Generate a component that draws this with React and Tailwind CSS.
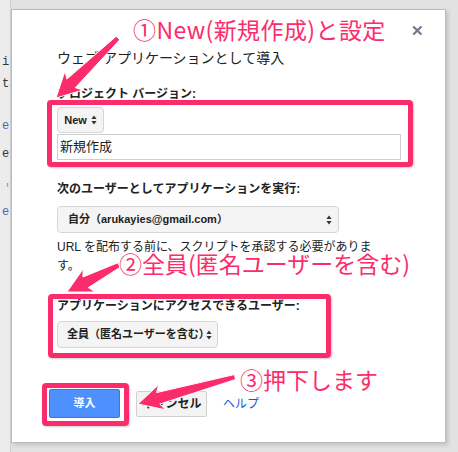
import React from 'react';

const PINK = '#fc2c6c';

// tapered annotation arrow, tail -> tip
function arrowPoints(x1, y1, x2, y2) {
  const dx = x2 - x1;
  const dy = y2 - y1;
  const len = Math.hypot(dx, dy);
  const ux = dx / len;
  const uy = dy / len;
  const nx = -uy;
  const ny = ux;
  const headLen = 25;
  const headHalf = 13;
  const t0 = 2.5;
  const t1 = 6;
  const bx = x2 - ux * headLen;
  const by = y2 - uy * headLen;
  const nb = 4; // small notch at the back of the head
  const pts = [
    [x1 + nx * t0, y1 + ny * t0],
    [bx + nx * t1 + ux * nb, by + ny * t1 + uy * nb],
    [bx + nx * headHalf, by + ny * headHalf],
    [x2, y2],
    [bx - nx * headHalf, by - ny * headHalf],
    [bx - nx * t1 + ux * nb, by - ny * t1 + uy * nb],
    [x1 - nx * t0, y1 - ny * t0],
  ];
  return pts.map((p) => p.map((v) => v.toFixed(1)).join(',')).join(' ');
}

const Updown = () => (
  <svg width="6" height="10" viewBox="0 0 6 10" className="shrink-0">
    <path d="M3 0.5 L5.6 4 L0.4 4 Z" fill="#333" />
    <path d="M3 9.5 L5.6 6 L0.4 6 Z" fill="#333" />
  </svg>
);

const App = () => {
  return (
    <div className="w-[458px] h-[452px] bg-[#e2e2e2] relative overflow-hidden flex font-['Liberation_Sans','Noto_Sans_CJK_JP',sans-serif]">
      {/* code editor behind the dialog */}
      <div className="w-[11px] shrink-0 h-full bg-[#ececec] border-r border-[#d0d0d0] overflow-hidden font-['Liberation_Mono',monospace] text-[12px] leading-[14px] text-[#333] whitespace-nowrap">
        <div className="mt-[55px] pl-[2px]">ip</div>
        <div className="mt-[8px] pl-[2px]">ta</div>
        <div className="mt-[28px] pl-[2px] text-[#3b6db5]">es</div>
        <div className="mt-[14px] pl-[2px]">ep</div>
        <div className="mt-[21px] pl-[4px] text-[#e06c8c]">'</div>
        <div className="mt-[9px] pl-[2px] text-[#3b6db5]">e.</div>
      </div>

      {/* dialog */}
      <div className="mt-[9px] w-[435px] h-[434px] bg-white border border-[#bdbdbd] shadow-[2px_2px_4px_rgba(0,0,0,0.15)] pl-[45px] pr-[19px] flex flex-col text-[#222]">
        <div className="flex justify-end pt-[15px] h-[38px]">
          <span className="text-[#777] text-[15px] font-bold leading-[12px] mr-[2px]">✕</span>
        </div>
        <div className="text-[14px] leading-[20px]">ウェブ アプリケーションとして導入</div>

        <div className="mt-[18px] text-[12px] leading-[16px] font-bold">プロジェクト バージョン:</div>
        <div className="mt-[5px] flex">
          <div className="h-[26px] w-[47px] rounded-[4px] border border-[#d6d6d6] bg-[#f4f4f4] flex items-center justify-center gap-[4px] text-[11px] font-bold">
            <span>New</span>
            <Updown />
          </div>
        </div>
        <div className="mt-[1px] h-[26px] w-[344px] border border-[#cfcfcf] flex items-center px-[2px] text-[13px]">新規作成</div>

        <div className="mt-[21px] text-[12px] leading-[16px] font-bold">次のユーザーとしてアプリケーションを実行:</div>
        <div className="mt-[9px] h-[27px] w-[282px] rounded-[4px] border border-[#d6d6d6] bg-[#f4f4f4] flex items-center justify-between pl-[10px] pr-[6px] text-[11px] font-bold">
          <span>自分（arukayies@gmail.com）</span>
          <Updown />
        </div>
        <div className="mt-[5px] text-[12px] leading-[19px]">
          URL を配布する前に、スクリプトを承認する必要がありま
          <br />
          す。
        </div>

        <div className="mt-[22px] text-[12px] leading-[16px] font-bold">アプリケーションにアクセスできるユーザー:</div>
        <div className="mt-[7px] h-[27px] w-[161px] rounded-[4px] border border-[#d6d6d6] bg-[#f4f4f4] flex items-center justify-between pl-[9px] pr-[5px] text-[11px] font-bold">
          <span>全員（匿名ユーザーを含む）</span>
          <Updown />
        </div>

        <div className="mt-[41px] flex items-center -ml-[8px]">
          <div className="h-[29px] w-[71px] rounded-[2px] border border-[#3079ed] bg-[#4d90fe] text-white text-[11px] font-bold flex items-center justify-center">導入</div>
          <div className="ml-[16px] h-[26px] w-[71px] rounded-[2px] border border-[#d0d0d0] bg-[#f3f3f3] text-[12px] font-bold flex items-center justify-center">キャンセル</div>
          <a className="ml-[16px] text-[12px] text-[#1a57c9]">ヘルプ</a>
        </div>
      </div>

      {/* annotation boxes */}
      <div className="absolute left-[47px] top-[100px] w-[366px] h-[67px] border-[5px] border-[#fc2c6c] rounded-[4px] shadow-[1px_1px_2px_rgba(0,0,0,0.2)]" />
      <div className="absolute left-[48px] top-[294px] w-[283px] h-[64px] border-[5px] border-[#fc2c6c] rounded-[4px] shadow-[1px_1px_2px_rgba(0,0,0,0.2)]" />
      <div className="absolute left-[42px] top-[383px] w-[87px] h-[43px] border-[5px] border-[#fc2c6c] rounded-[4px] shadow-[1px_1px_2px_rgba(0,0,0,0.2)]" />

      {/* annotation text */}
      <div className="absolute left-[133px] top-[14px] text-[23px] leading-[30px] tracking-[0.4px] text-[#fc2c6c] font-['Noto_Sans_CJK_JP',sans-serif] whitespace-nowrap">①New(新規作成)と設定</div>
      <div className="absolute left-[119px] top-[248px] text-[23px] leading-[30px] text-[#fc2c6c] font-['Noto_Sans_CJK_JP',sans-serif] whitespace-nowrap">②全員(匿名ユーザーを含む)</div>
      <div className="absolute left-[240px] top-[364px] text-[23px] leading-[30px] text-[#fc2c6c] font-['Noto_Sans_CJK_JP',sans-serif] whitespace-nowrap">③押下します</div>

      {/* arrows */}
      <svg className="absolute left-0 top-0 pointer-events-none" width="458" height="452">
        <polygon points={arrowPoints(118, 38, 56, 98)} fill={PINK} stroke="#fff" strokeWidth="1" strokeLinejoin="round" />
        <polygon points={arrowPoints(119, 265, 67, 292)} fill={PINK} stroke="#fff" strokeWidth="1" strokeLinejoin="round" />
        <polygon points={arrowPoints(235, 377, 138, 404)} fill={PINK} stroke="#fff" strokeWidth="1" strokeLinejoin="round" />
      </svg>
    </div>
  );
};

export default App;
